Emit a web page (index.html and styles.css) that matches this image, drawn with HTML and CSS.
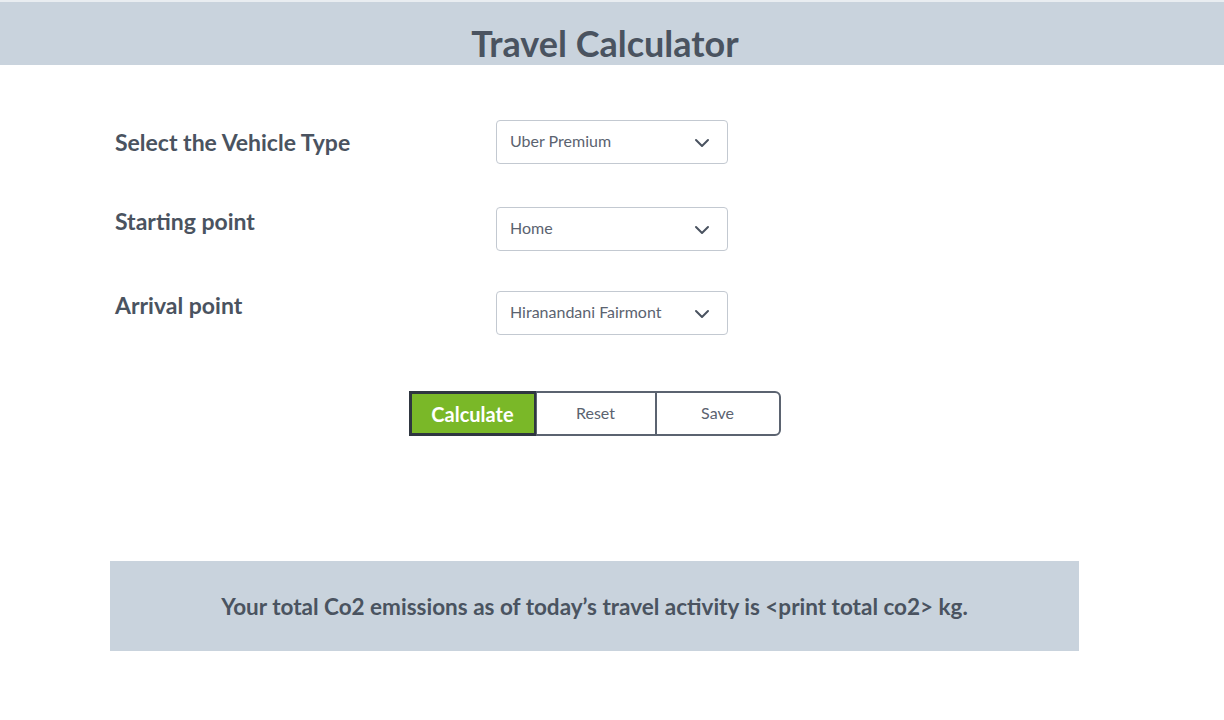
FILE: index.html
```html
<!DOCTYPE html>
<html lang="en">
  <head>
    <meta charset="UTF-8" />
    <meta name="viewport" content="width=device-width, initial-scale=1.0" />
    <title>Travel Calculator</title>
    <link rel="stylesheet" href="styles.css">
  </head>
  <body>
    <header class="top-bar">
      <h1>Travel Calculator</h1>
    </header>

    <main class="calculator">
      <div class="form-row form-row--first">
        <label class="field-label" for="vehicle">Select the Vehicle Type</label>
        <div class="select-box">
          <select id="vehicle">
            <option>Uber Premium</option>
            <option>Uber Go</option>
            <option>Auto Rickshaw</option>
          </select>
          <svg class="chevron" width="16" height="10" viewBox="0 0 16 10"><path d="M2 2l6 6 6-6" fill="none" stroke="#4a5360" stroke-width="2" stroke-linecap="round" stroke-linejoin="round"/></svg>
        </div>
      </div>

      <div class="form-row">
        <label class="field-label" for="start">Starting point</label>
        <div class="select-box">
          <select id="start">
            <option>Home</option>
            <option>Office</option>
          </select>
          <svg class="chevron" width="16" height="10" viewBox="0 0 16 10"><path d="M2 2l6 6 6-6" fill="none" stroke="#4a5360" stroke-width="2" stroke-linecap="round" stroke-linejoin="round"/></svg>
        </div>
      </div>

      <div class="form-row">
        <label class="field-label" for="arrival">Arrival point</label>
        <div class="select-box">
          <select id="arrival">
            <option>Hiranandani Fairmont</option>
            <option>Home</option>
          </select>
          <svg class="chevron" width="16" height="10" viewBox="0 0 16 10"><path d="M2 2l6 6 6-6" fill="none" stroke="#4a5360" stroke-width="2" stroke-linecap="round" stroke-linejoin="round"/></svg>
        </div>
      </div>

      <div class="btn-group">
        <button class="btn btn-calc">Calculate</button>
        <button class="btn">Reset</button>
        <button class="btn">Save</button>
      </div>

      <div class="result">
        Your total Co2 emissions as of today’s travel activity is &lt;print total co2&gt; kg.
      </div>
    </main>
  </body>
</html>
```

FILE: styles.css
```css
:root {
  --bar: #c9d3dd;
  --text: #4a5360;
  --muted: #5b6370;
  --green: #7ab828;
  --line: #c3c9d1;
}
body {
  margin: 0;
  font-family: Lato, "Open Sans", sans-serif;
  color: var(--text);
  background: #fff;
}
.top-bar {
  background: var(--bar);
  border-top: 2px solid #e9edf1;
  height: 63px;
  display: flex;
  align-items: center;
  justify-content: center;
}
h1 {
  margin: 0;
  padding-top: 18px;
  padding-right: 14px;
  font-size: 36px;
  font-weight: 700;
  line-height: 1;
}
.calculator {
  width: 969px;
  margin-left: 110px;
  padding-top: 55px;
}
.form-row {
  display: flex;
  align-items: flex-start;
  margin-bottom: 43px;
}
.form-row:nth-child(2) {
  margin-bottom: 40px;
}
.field-label {
  width: 381px;
  padding-left: 5px;
  font-size: 23px;
  font-weight: 700;
  line-height: 28px;
}
.form-row--first {
  align-items: center;
}
.select-box {
  position: relative;
  width: 232px;
  height: 44px;
}
select {
  appearance: none;
  width: 100%;
  height: 100%;
  border: 1px solid var(--line);
  border-radius: 4px;
  background: #fff;
  padding: 0 40px 4px 13px;
  font-family: Lato, "Open Sans", sans-serif;
  font-size: 16px;
  color: var(--muted);
}
.chevron {
  position: absolute;
  right: 18px;
  top: 18px;
  pointer-events: none;
}
.btn-group {
  display: flex;
  justify-content: center;
  margin-top: 56px;
}
.btn {
  width: 121px;
  height: 45px;
  padding-bottom: 4px;
  background: #fff;
  border: 2px solid var(--muted);
  border-left-width: 1px;
  font-family: Lato, "Open Sans", sans-serif;
  font-size: 16px;
  color: var(--muted);
  cursor: pointer;
}
.btn + .btn {
  margin-left: -1px;
}
.btn:last-child {
  width: 125px;
  border-radius: 0 6px 6px 0;
}
.btn-calc {
  width: 128px;
  padding-bottom: 0;
  background: var(--green);
  border: 3px solid #2f3640;
  color: #fff;
  font-size: 20px;
  font-weight: 700;
}
.result {
  margin-top: 125px;
  height: 90px;
  background: var(--bar);
  display: flex;
  align-items: center;
  justify-content: center;
  font-size: 22.5px;
  font-weight: 700;
}
```
